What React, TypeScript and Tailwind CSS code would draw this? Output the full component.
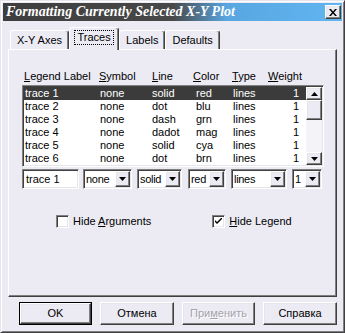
import React from "react";

// Win-classic bevels used all over the dialog
const raised =
  "border border-t-white border-l-white border-r-[#404040] border-b-[#404040] shadow-[inset_-1px_-1px_0_#808080,inset_1px_1px_0_#e6e5ec]";
const sunken =
  "border border-t-[#808080] border-l-[#808080] border-r-white border-b-white shadow-[inset_1px_1px_0_#404040,inset_-1px_-1px_0_#e6e5ec]";

const traces = [
  ["trace 1", "none", "solid", "red", "lines", "1"],
  ["trace 2", "none", "dot", "blu", "lines", "1"],
  ["trace 3", "none", "dash", "grn", "lines", "1"],
  ["trace 4", "none", "dadot", "mag", "lines", "1"],
  ["trace 5", "none", "solid", "cya", "lines", "1"],
  ["trace 6", "none", "dot", "brn", "lines", "1"],
];

const Arrow = ({ up = false }: { up?: boolean }) => (
  <svg width="7" height="4" viewBox="0 0 7 4">
    {up ? <path d="M3.5 0 L7 4 L0 4 Z" fill="#000" /> : <path d="M0 0 L7 0 L3.5 4 Z" fill="#000" />}
  </svg>
);

// Combo box: sunken field with a raised drop button
const Combo = ({ value, width, ml }: { value: string; width: string; ml: string }) => (
  <div className={`${sunken} ${width} ${ml} h-[20px] bg-white flex items-stretch p-[1px]`}>
    <span className="flex-1 pl-[1px] leading-[16px] tracking-[-0.3px] overflow-hidden whitespace-nowrap">{value}</span>
    <span className={`${raised} w-[15px] shrink-0 bg-[#ecebf4] flex items-center justify-center`}>
      <Arrow />
    </span>
  </div>
);

const Check = ({ checked }: { checked?: boolean }) => (
  <span className={`${sunken} w-[13px] h-[13px] bg-white flex items-center justify-center`}>
    {checked && (
      <svg width="7" height="7" viewBox="0 0 7 7">
        <path d="M0 2 L0 4 L2 6 L7 1 L7 -1 L2 4 Z" fill="#000" />
      </svg>
    )}
  </span>
);

const Tab = ({ label }: { label: string }) => (
  <div className="h-[19px] border-t border-l border-r border-t-white border-l-white border-r-[#404040] shadow-[inset_-1px_0_0_#808080] rounded-t-[3px] flex items-center px-[6px]">
    {label}
  </div>
);

export default function App() {
  return (
    <div className="w-[345px] h-[333px] bg-[#ecebf4] border border-t-[#e6e5ec] border-l-[#e6e5ec] border-r-[#404040] border-b-[#404040] shadow-[inset_1px_1px_0_#fff,inset_-1px_-1px_0_#808080] p-[2px] flex flex-col font-['Liberation_Sans',Arial,sans-serif] text-[11px] text-black">
      {/* Title bar */}
      <div className="h-[18px] flex items-center bg-[linear-gradient(to_right,#3e3e3e_0%,#484848_50%,#58a6e2_66%,#60b6f0_100%)]">
        <span className="flex-1 pl-[3px] text-white font-bold italic text-[14px] font-['Liberation_Serif',serif] leading-[18px]">
          Formatting Currently Selected X-Y Plot
        </span>
        <span className={`${raised} w-[16px] h-[14px] bg-[#ecebf4] mr-[1px] flex items-center justify-center`}>
          <svg width="8" height="7" viewBox="0 0 8 7">
            <path d="M0 0 L2 0 L4 2.5 L6 0 L8 0 L5 3.5 L8 7 L6 7 L4 4.5 L2 7 L0 7 L3 3.5 Z" fill="#000" />
          </svg>
        </span>
      </div>

      {/* Tabs */}
      <div className="mt-[6px] mx-[5px] flex items-end pl-[2px] h-[22px]">
        <Tab label="X-Y Axes" />
        <div className="relative z-10 -mb-px h-[23px] w-[50px] bg-[#ecebf4] border-t border-l border-r border-t-white border-l-white border-r-[#404040] shadow-[inset_-1px_0_0_#808080] rounded-t-[3px] flex items-start justify-center pt-[3px]">
          <span className="outline outline-1 outline-dotted outline-black px-[2px] leading-[13px]">Traces</span>
        </div>
        <Tab label="Labels" />
        <Tab label="Defaults" />
      </div>

      {/* Tab panel */}
      <div className="mx-[5px] h-[248px] border border-t-white border-l-white border-r-[#404040] border-b-[#404040] shadow-[inset_-1px_-1px_0_#808080] pt-[20px] pl-[13px]">
        {/* Column headers */}
        <div className="flex h-[13px] leading-[13px] pl-[2px]">
          <span className="w-[75px]"><u>L</u>egend Label</span>
          <span className="w-[53px]"><u>S</u>ymbol</span>
          <span className="w-[41px]"><u>L</u>ine</span>
          <span className="w-[39px]"><u>C</u>olor</span>
          <span className="w-[36px]"><u>T</u>ype</span>
          <span><u>W</u>eight</span>
        </div>

        {/* Trace list */}
        <div className={`${sunken} mt-[2px] w-[302px] h-[82px] bg-white p-[1px] flex`}>
          <div className="flex-1 flex flex-col">
            {traces.map((t, i) => (
              <div
                key={t[0]}
                className={`flex h-[13px] leading-[13px] pl-[1px] ${i === 0 ? "bg-[#3b3b3b] text-white" : ""}`}
              >
                <span className="w-[75px]">{t[0]}</span>
                <span className="w-[52px]">{t[1]}</span>
                <span className="w-[44px]">{t[2]}</span>
                <span className="w-[37px]">{t[3]}</span>
                <span className="w-[66px] flex justify-between">
                  <span>{t[4]}</span>
                  <span>{t[5]}</span>
                </span>
              </div>
            ))}
          </div>
          {/* Scrollbar */}
          <div className="w-[16px] flex flex-col bg-[#f3f3f8]">
            <span className={`${raised} h-[13px] bg-[#ecebf4] flex items-center justify-center`}>
              <Arrow up />
            </span>
            <span className={`${raised} h-[20px] bg-[#ecebf4]`} />
            <span className="flex-1" />
            <span className={`${raised} h-[13px] bg-[#ecebf4] flex items-center justify-center`}>
              <Arrow />
            </span>
          </div>
        </div>

        {/* Edit row */}
        <div className="mt-[2px] flex">
          <div className={`${sunken} w-[57px] h-[20px] bg-white pl-[3px] leading-[18px]`}>trace 1</div>
          <Combo value="none" width="w-[49px]" ml="ml-[4px]" />
          <Combo value="solid" width="w-[45px]" ml="ml-[5px]" />
          <Combo value="red" width="w-[38px]" ml="ml-[6px]" />
          <Combo value="lines" width="w-[56px]" ml="ml-[5px]" />
          <Combo value="1" width="w-[30px]" ml="ml-[5px]" />
        </div>

        {/* Options */}
        <div className="mt-[26px] flex items-center h-[13px]">
          <span className="ml-[34px]"><Check /></span>
          <span className="ml-[4px]">Hide <u>A</u>rguments</span>
          <span className="ml-[61px]"><Check checked /></span>
          <span className="ml-[4px]"><u>H</u>ide Legend</span>
        </div>
      </div>

      {/* Buttons */}
      <div className="mt-[5px] flex pl-[16px] gap-[8px]">
        <button className="w-[73px] h-[23px] border border-black p-0">
          <div className={`${raised} h-full flex items-center justify-center`}>OK</div>
        </button>
        <button className={`${raised} w-[74px] h-[23px]`}>Отмена</button>
        <button className={`${raised} w-[73px] h-[23px] text-[#a3a2aa] [text-shadow:1px_1px_0_#fff]`}>
          При<u>м</u>енить
        </button>
        <button className={`${raised} w-[74px] h-[23px]`}>Справка</button>
      </div>
    </div>
  );
}
